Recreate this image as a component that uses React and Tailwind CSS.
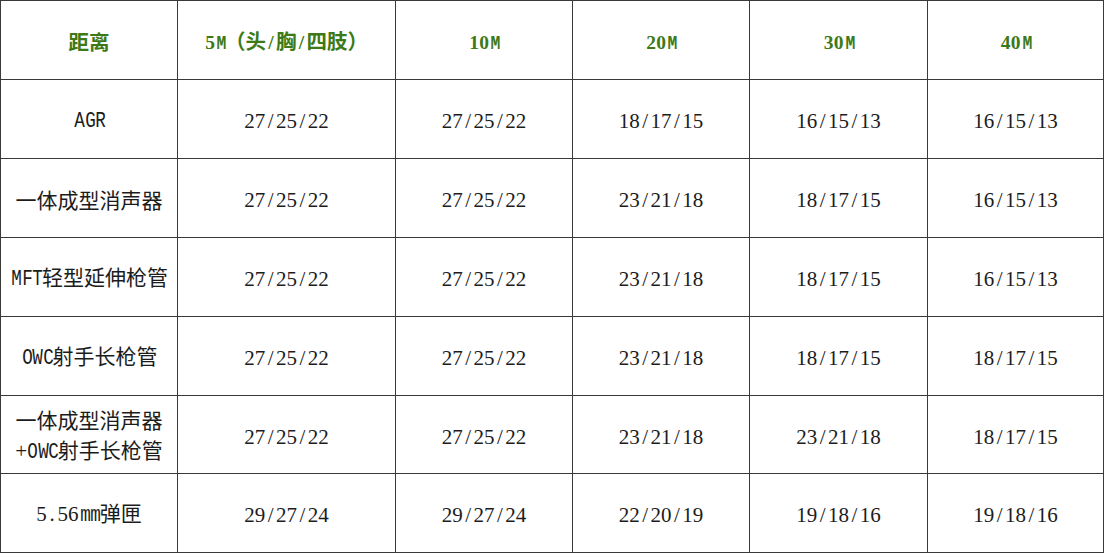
import React from "react";

const header = ["距离", "5M（头/胸/四肢）", "10M", "20M", "30M", "40M"];
const rows = [
  ["AGR", "27/25/22", "27/25/22", "18/17/15", "16/15/13", "16/15/13"],
  ["一体成型消声器", "27/25/22", "27/25/22", "23/21/18", "18/17/15", "16/15/13"],
  ["MFT轻型延伸枪管", "27/25/22", "27/25/22", "23/21/18", "18/17/15", "16/15/13"],
  ["OWC射手长枪管", "27/25/22", "27/25/22", "23/21/18", "18/17/15", "18/17/15"],
  ["一体成型消声器\n+OWC射手长枪管", "27/25/22", "27/25/22", "23/21/18", "23/21/18", "18/17/15"],
  ["5.56mm弹匣", "29/27/24", "29/27/24", "22/20/19", "19/18/16", "19/18/16"],
];

function Glyphs({ text, head }) {
  return (
    <span>
      {Array.from(text).map((ch, i) => {
        const ascii = ch.charCodeAt(0) < 128;
        if (!ascii) return <span key={i}>{ch}</span>;
        const letter = /[A-Za-z]/.test(ch);
        if (head) {
          return letter ? (
            <span key={i} className="inline-block w-[10px] text-center">
              <span className="inline-block scale-x-[0.78] font-['Liberation_Mono'] text-[21px] font-bold">{ch}</span>
            </span>
          ) : (
            <span key={i} className="inline-block w-[10px] text-center font-['Liberation_Serif'] text-[19.5px] font-bold">{ch}</span>
          );
        }
        return letter ? (
          <span key={i} className="inline-block w-[10.6px] text-center">
            <span className="inline-block scale-x-[0.8] font-['Liberation_Mono'] text-[22px]">{ch}</span>
          </span>
        ) : (
          <span key={i} className="inline-block w-[10.6px] text-center font-['Liberation_Serif'] text-[21px]">{ch}</span>
        );
      })}
    </span>
  );
}

const rowH = ["h-[79px]", "h-[79px]", "h-[79px]", "h-[79px]", "h-[79px]", "h-[78px]", "h-[79px]"];

export default function App() {
  return (
    <div className="w-[1105px] h-[553px] bg-white overflow-hidden font-['Noto_Sans_CJK_SC',sans-serif]">
      <div className="w-[1104px] border-l border-t border-[#3a3a3a] grid grid-cols-[177px_218px_177px_177px_178px_176px]">
        {header.map((h, i) => (
          <div
            key={i}
            className={`${rowH[0]} border-r border-b border-[#3a3a3a] flex items-center justify-center text-[20.5px] font-bold text-[#3d7a17] leading-none pt-[3px]`}
          >
            <Glyphs text={h} head />
          </div>
        ))}
        {rows.map((r, ri) =>
          r.map((c, ci) => (
            <div
              key={ri + "-" + ci}
              className={`${rowH[ri + 1]} border-r border-b border-[#3a3a3a] flex flex-col items-center justify-center text-[21px] text-[#1c1c1c] leading-[30px] pt-[2px]`}
            >
              {c.split("\n").map((line, li) => (
                <div key={li}>
                  <Glyphs text={line} />
                </div>
              ))}
            </div>
          ))
        )}
      </div>
    </div>
  );
}
